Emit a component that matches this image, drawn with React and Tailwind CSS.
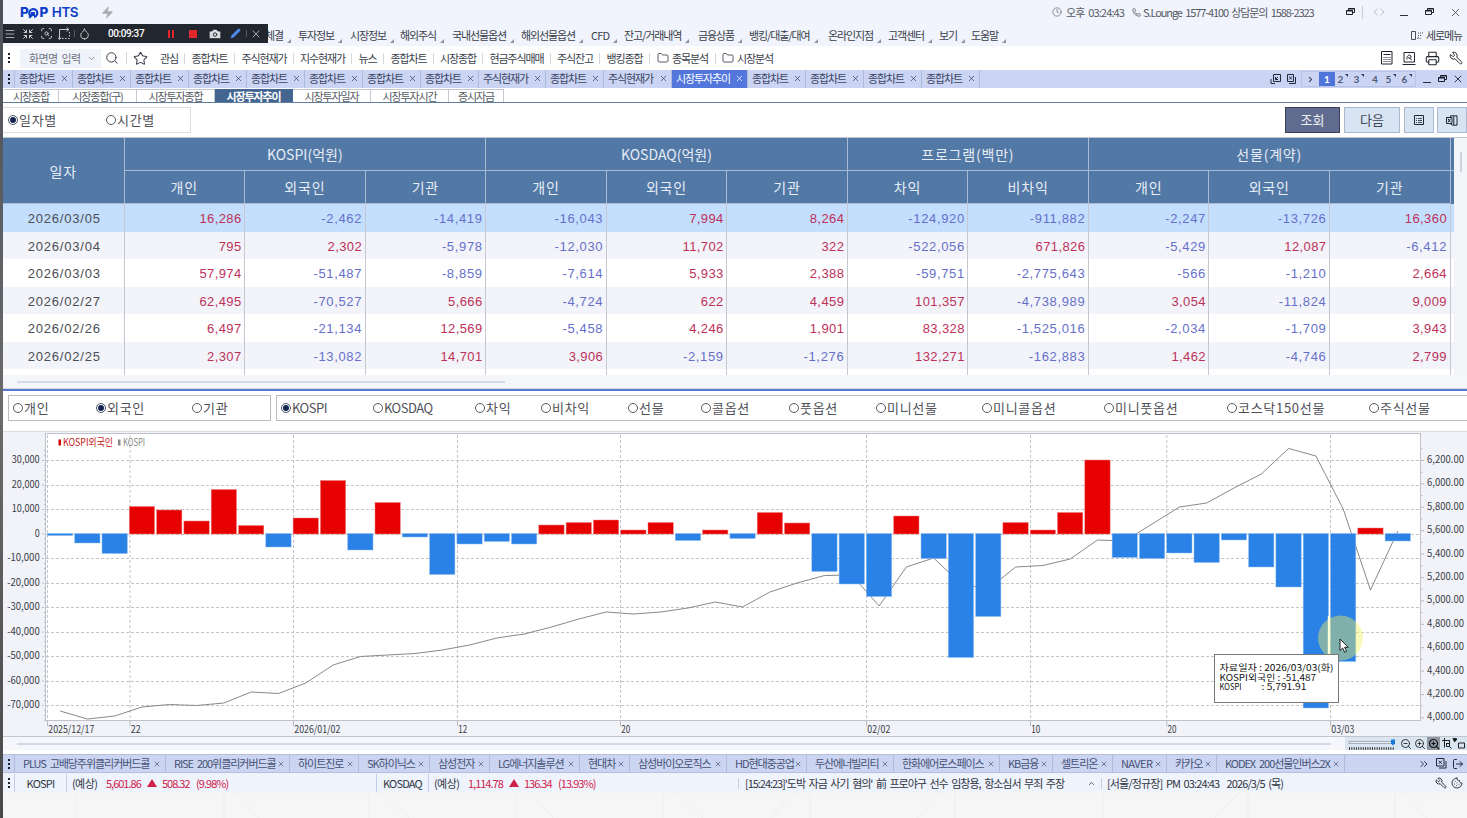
import clsx from "clsx";
import {
    Menu, Shrink, ScanSearch, Droplet, Camera, Pencil, X, Search, Star, ChevronDown, ChevronRight, ChevronsRight,
    ChevronUp, Folder, Clock4, Phone, Printer, Wrench, Cookie, LogOut, ZoomIn, ZoomOut, Zap,
} from "lucide-react";

const MENUS = [
    ["체결", "w-[33px]"], ["투자정보", "w-[52px]"], ["시장정보", "w-[50px]"], ["해외주식", "w-[52px]"],
    ["국내선물옵션", "w-[69px]"], ["해외선물옵션", "w-[70px]"], ["CFD", "w-[33px]"], ["잔고/거래내역", "w-[74px]"],
    ["금융상품", "w-[51px]"], ["뱅킹/대출/대여", "w-[79px]"], ["온라인지점", "w-[60px]"], ["고객센터", "w-[51px]"],
    ["보기", "w-[32px]"], ["도움말", "w-[36px]"],
];

const SHORTCUTS = [
    ["관심", "w-[31px]"], ["종합차트", "w-[50px]"], ["주식현재가", "w-[59px]"], ["지수현재가", "w-[58px]"],
    ["뉴스", "w-[32px]"], ["종합차트", "w-[50px]"], ["시장종합", "w-[49px]"], ["현금주식매매", "w-[68px]"],
    ["주식잔고", "w-[49px]"], ["뱅킹종합", "w-[50px]"], ["종목분석", "w-[66px]", true], ["시장분석", "w-[64px]", true],
];

const TABS = [
    ...Array(8).fill(["종합차트", "w-[58px]"]),
    ["주식현재가", "w-[67px]"], ["종합차트", "w-[58px]"], ["주식현재가", "w-[68px]"], ["시장투자추이", "w-[76px]", true],
    ...Array(4).fill(["종합차트", "w-[58px]"]),
];

const SUB_TABS = [
    ["시장종합", "w-[55px]"], ["시장종합(구)", "w-[78px]"], ["시장투자종합", "w-[78px]"], ["시장투자추이", "w-[78px]", true],
    ["시장투자일자", "w-[78px]"], ["시장투자시간", "w-[78px]"], ["증시자금", "w-[55px]"],
];

const GROUPS = [
    { name: "KOSPI(억원)", cols: ["개인", "외국인", "기관"], span: "col-span-3" },
    { name: "KOSDAQ(억원)", cols: ["개인", "외국인", "기관"], span: "col-span-3" },
    { name: "프로그램(백만)", cols: ["차익", "비차익"], span: "col-span-2" },
    { name: "선물(계약)", cols: ["개인", "외국인", "기관"], span: "col-span-3" },
];

const ROWS = [
    ["2026/03/05", "16,286", "-2,462", "-14,419", "-16,043", "7,994", "8,264", "-124,920", "-911,882", "-2,247", "-13,726", "16,360"],
    ["2026/03/04", "795", "2,302", "-5,978", "-12,030", "11,702", "322", "-522,056", "671,826", "-5,429", "12,087", "-6,412"],
    ["2026/03/03", "57,974", "-51,487", "-8,859", "-7,614", "5,933", "2,388", "-59,751", "-2,775,643", "-566", "-1,210", "2,664"],
    ["2026/02/27", "62,495", "-70,527", "5,666", "-4,724", "622", "4,459", "101,357", "-4,738,989", "3,054", "-11,824", "9,009"],
    ["2026/02/26", "6,497", "-21,134", "12,569", "-5,458", "4,246", "1,901", "83,328", "-1,525,016", "-2,034", "-1,709", "3,943"],
    ["2026/02/25", "2,307", "-13,082", "14,701", "3,906", "-2,159", "-1,276", "132,271", "-162,883", "1,462", "-4,746", "2,799"],
];

const INVESTORS = [["개인", "w-[83px]"], ["외국인", "w-[96px]", true], ["기관", "w-[60px]"]];
const MARKETS = [
    ["KOSPI", "w-[92px]", true], ["KOSDAQ", "w-[102px]"], ["차익", "w-[66px]"], ["비차익", "w-[87px]"], ["선물", "w-[73px]"],
    ["콜옵션", "w-[88px]"], ["풋옵션", "w-[87px]"], ["미니선물", "w-[106px]"], ["미니콜옵션", "w-[122px]"],
    ["미니풋옵션", "w-[123px]"], ["코스닥150선물", "w-[142px]"], ["주식선물", "w-[80px]"],
];

const STOCKS = [
    ["PLUS 고배당주위클리커버드콜", "w-[151px]"], ["RISE 200위클리커버드콜", "w-[124px]"], ["하이트진로", "w-[69px]"],
    ["SK하이닉스", "w-[71px]"], ["삼성전자", "w-[60px]"], ["LG에너지솔루션", "w-[90px]"], ["현대차", "w-[50px]"],
    ["삼성바이오로직스", "w-[97px]"], ["HD현대중공업", "w-[80px]"], ["두산에너빌리티", "w-[87px]"],
    ["한화에어로스페이스", "w-[106px]"], ["KB금융", "w-[53px]"], ["셀트리온", "w-[60px]"], ["NAVER", "w-[54px]"],
    ["카카오", "w-[50px]"], ["KODEX 200선물인버스2X", "w-[128px]"],
];

// end y of every bar; the zero line is at ZERO
const ZERO = 533.5;
const BARS = [
    535, 542.5, 553, 506.5, 510, 521, 489.5, 525.5, 546.5, 518, 480.5, 549.5, 502.5, 536.5, 574, 543.5, 541, 543.5, 525, 522.5,
    520, 530, 522.5, 540, 530, 538, 512.5, 523, 571, 583.5, 596, 516, 558, 657, 616, 522.5, 530, 512.5, 460, 557,
    558, 552.5, 562, 539.5, 566.5, 586.5, 707.5, 661, 528, 540.5,
];
const INDEX_LINE = [
    711, 719, 716, 707, 704.5, 705.5, 703, 692, 693.5, 683, 665, 656.5, 655, 653.5, 650, 645, 638, 634, 627, 619,
    612, 614, 612, 608, 602, 607, 592, 583, 575.5, 575, 606, 567, 558, 584, 589, 567, 565.5, 559, 540, 541,
    524, 507, 503, 488, 474, 448.5, 456, 509, 590, 531,
];
const PITCH = 27.3;
const FIRST_X = 47.4;
const LEFT_LABELS = ["30,000", "20,000", "10,000", "0", "-10,000", "-20,000", "-30,000", "-40,000", "-50,000", "-60,000", "-70,000"];
const RIGHT_LABELS = ["6,200.00", "6,000.00", "5,800.00", "5,600.00", "5,400.00", "5,200.00", "5,000.00", "4,800.00", "4,600.00", "4,400.00", "4,200.00", "4,000.00"];
const DATES = [
    [47.5, "2025/12/17", 46], [130, "22", 10], [293.5, "2026/01/02", 46], [457.5, "12", 9], [620.5, "20", 9],
    [866.5, "02/02", 23], [1030.5, "10", 9], [1166.8, "20", 9], [1330.5, "03/03", 23],
];

function Dots() {
    return (
        <span className="flex w-[11px] shrink-0 flex-col items-center justify-center gap-[2px]">
            <i className="size-[2px] bg-[#1b1f2a]" />
            <i className="size-[2px] bg-[#1b1f2a]" />
            <i className="size-[2px] bg-[#1b1f2a]" />
        </span>
    );
}

function Restore() {
    return (
        <svg width="11" height="10" viewBox="0 0 11 10" fill="none" stroke="#1b1f2a" strokeWidth="1">
            <path d="M3.500 3.500V1.500h6v4H7.500M1.500 3.500h6v4h-6zM3.500 2h6M1.500 4h6" />
        </svg>
    );
}

function Minimize() {
    return <span className="mt-[7px] h-[1.5px] w-[8px] bg-[#2b3040]" />;
}

function Radio({ label, width, checked }) {
    return (
        <label className={clsx("flex shrink-0 items-center", width)}>
            <span className={clsx("flex size-[10px] shrink-0 items-center justify-center rounded-full border bg-white", checked ? "border-[#4a5570]" : "border-[#555a62]")}>
                {checked && <i className="size-[6px] rounded-full bg-[#10264f]" />}
            </span>
            <span className={clsx("mb-[2px] ml-px text-[13px] whitespace-nowrap text-[#505058]", /^[A-Z]/.test(label) ? "tracking-[-0.5px]" : "tracking-[0.7px]")}>{label}</span>
        </label>
    );
}

function TitleBar() {
    return (
        <header className="flex h-[24px] items-center justify-between bg-[#f1f4fc] text-[11px]">
            <div className="flex items-center pt-px pl-[17px] text-[#0f3fc8]">
                <span className="flex items-center font-['Inter'] text-[13.5px] leading-none font-extrabold tracking-[-0.4px]">
                    P
                    <svg width="11" height="12" viewBox="0 0 11 12" fill="none" stroke="#0f3fc8" strokeWidth="2.2">
                        <path d="M2.2 8.6A4 4 0 1 1 6 10M1.2 10.8 5.6 6.4M5.8 9V6.2H3" />
                    </svg>
                    P
                </span>
                <span className="ml-[4px] font-['Inter'] text-[13.5px] leading-none font-semibold tracking-[-0.5px]">HTS</span>
                <Zap size={13} className="ml-[23px] fill-[#a9abb2] text-[#a9abb2]" strokeWidth={1} />
            </div>
            <div className="flex items-center text-[#555963]">
                <Clock4 size={10} strokeWidth={1.5} />
                <span className="ml-[4px] w-[66px] tracking-[-0.85px] [word-spacing:2px]">오후 03:24:43</span>
                <Phone size={9} strokeWidth={2} />
                <span className="ml-[2px] w-[202px] tracking-[-1.1px] whitespace-nowrap [word-spacing:2px]">S.Lounge 1577-4100 상담문의 1588-2323</span>
                <Restore />
                <span className="ml-[6px] h-[13px] w-px bg-[#c9ccd6]" />
                <svg width="12" height="8" viewBox="0 0 12 8" fill="none" stroke="#b4b8c4" className="ml-[10px]"><path d="M4.5.8 1 4l3.500 3.200M7.500.8 11 4 7.500 7.200" /></svg>
                <span className="ml-[15px] flex"><Minimize /></span>
                <span className="ml-[16px] flex"><Restore /></span>
                <X size={13} strokeWidth={1.8} className="mr-[5px] ml-[14px]" />
            </div>
        </header>
    );
}

function RecorderBar() {
    return (
        <div className="absolute top-[24px] left-[3px] flex h-[19px] w-[265px] items-center bg-[#22272f] text-[#c6c8cc]">
            <Menu size={12} className="ml-[1px]" strokeWidth={1.6} />
            <Shrink size={12} className="ml-[6px]" strokeWidth={2} />
            <ScanSearch size={13} className="ml-[6px]" strokeWidth={1.8} />
            <svg width="13" height="13" viewBox="0 0 13 13" fill="none" stroke="#c6c8cc" className="ml-[5px]">
                <path d="M1.500 12V2.500h9M8.500.5l2.500 2-2.500 2M0 10.500l1.500 2 1.500-2" /><path d="M4 11.500h8M11.500 5v6" strokeDasharray="1.500 1.500" />
            </svg>
            <span className="ml-[3px] h-[7px] w-px bg-[#555a63]" />
            <Droplet size={13} className="ml-[3px]" strokeWidth={1.8} />
            <span className="ml-[17px] w-[60px] font-['Roboto'] text-[10px] font-medium tracking-[-0.4px] text-white">00:09:37</span>
            <span className="flex gap-[2px]">
                <i className="h-[8px] w-[2px] bg-[#e0282e]" />
                <i className="h-[8px] w-[2px] bg-[#e0282e]" />
            </span>
            <span className="ml-[15px] size-[8px] bg-[#e0282e]" />
            <Camera size={14} className="ml-[11px] fill-[#dcdcde] text-[#22272f]" strokeWidth={1.6} />
            <Pencil size={11} className="ml-[8px] fill-[#4d8df0] text-[#4d8df0]" strokeWidth={1} />
            <span className="ml-[5px] h-[7px] w-px bg-[#555a63]" />
            <X size={12} className="ml-[3px]" strokeWidth={1.6} />
        </div>
    );
}

function MenuBar() {
    return (
        <nav className="flex h-[22px] items-center bg-[#f1f4fc] pl-[262px] text-[11px] tracking-[-1.1px] text-[#3b3f4b]">
            {MENUS.map(([label, width]) => (
                <span key={label} className={clsx("flex shrink-0 items-center gap-[4px] whitespace-nowrap", width)}>
                    <span className={label === "CFD" ? "tracking-[-0.8px]" : ""}>{label}</span>
                    <svg width="4" height="4" viewBox="0 0 4 4" className="mt-[11px] shrink-0"><path d="M4 0v4H0z" fill="#8d93a3" /></svg>
                </span>
            ))}
            <span className="mr-[5px] ml-auto flex items-center gap-[3px]">
                <svg width="13" height="9" viewBox="0 0 13 9" fill="none" stroke="#4a4e5a"><path d="M1.500.5h4v8h-4z" /><path d="M8 2h1M10 2h1M12 2h1M8 4.500h1M10 4.500h1M7 7.500l2-1M9.500 7.500h1" /></svg>
                세로메뉴
            </span>
        </nav>
    );
}

function ToolBar() {
    return (
        <div className="flex h-[24px] items-center bg-white text-[11px] tracking-[-1.1px] text-[#3b3f4b]">
            <Dots />
            <div className="ml-[6px] flex h-[19px] w-[81px] items-center justify-between bg-[#f1f3fb] pr-[5px] pl-[9px] text-[#70737c]">
                <span className="tracking-[-0.6px] [word-spacing:2px]">화면명 입력</span>
                <ChevronDown size={9} strokeWidth={2} />
            </div>
            <Search size={14} className="ml-[4px]" strokeWidth={1.7} />
            <span className="ml-[7px] h-[12px] w-px bg-[#d5d7dd]" />
            <Star size={15} className="ml-[6px]" strokeWidth={1.7} />
            <span className="ml-[6px] flex">
                {SHORTCUTS.map(([label, width, folder], i) => (
                    <span key={i} className={clsx("flex h-[11px] shrink-0 items-center justify-center gap-[3px] border-r whitespace-nowrap", width, i === 11 ? "border-transparent" : "border-[#d5d7dd]")}>
                        {folder && <Folder size={12} strokeWidth={1.7} className="shrink-0" />}
                        {label}
                    </span>
                ))}
            </span>
            <span className="mr-[4px] ml-auto flex items-center gap-[9px] text-[#22252d]">
                <svg width="12" height="14" viewBox="0 0 12 14" fill="none" stroke="#22252d">
                    <path d="M.5.5h10.500v12.500H.5zM2.500 3.500h7" /><path d="M2.500 6.500h7M2.500 8.500h7M2.500 10.500h7" strokeDasharray="1 1" />
                </svg>
                <svg width="14" height="13" viewBox="0 0 14 13" fill="none" stroke="#22252d"><path d="M2 .5h10.500v9.500H2zM.5 12.500h13M5 7.500C4.500 4 6.500 2.800 8 3.300s1.500 2.700 0 3.200L6 5.500M8 6.500 9.800 8" /></svg>
                <Printer size={15} strokeWidth={1.7} />
                <Wrench size={14} strokeWidth={1.7} className="-scale-x-100" />
            </span>
        </div>
    );
}

function ScreenTabs() {
    return (
        <div className="flex h-[18px] items-stretch bg-[#cbd5f3] text-[11px] tracking-[-1.1px] text-[#3a4463]">
            <Dots />
            {TABS.map(([label, width, active], i) => (
                <span
                    key={i}
                    className={clsx("flex shrink-0 items-center justify-between border-l border-[#b0bbdc] pr-[3px] pb-px pl-[4px] whitespace-nowrap", width, active && "bg-[#5377dc] text-white")}
                >
                    {label}
                    <X size={9} strokeWidth={2} />
                </span>
            ))}
            <span className="w-px bg-[#b0bbdc]" />
            <span className="mr-[3px] ml-auto flex items-center tracking-normal text-[#22283a]">
                <svg width="27" height="12" viewBox="0 0 27 12" fill="none" stroke="#22283a" className="mr-[4px]">
                    <path d="M3.500 1.500h7v7h-7zM1 6v4.500h4M5.500 6.500 8 4M5.500 4v2.500H8M17.500 1.500h6v7h-6zM19 10.500h6.500V4M19.200 3.500l2.600 3M21.800 3.500l-2.600 3" />
                </svg>
                <span className="flex items-center border border-[#b7c2e4] text-[10px] text-[#505a75]">
                    <ChevronRight size={9} strokeWidth={2.8} className="mx-[4px] text-[#22283a]" />
                    {[1, 2, 3, 4, 5, 6].map((n) => (
                        <span key={n} className={clsx("flex h-[14px] w-[16px] items-center justify-center font-['Lato'] leading-none font-bold", n === 1 && "bg-[#4f75da] text-white")}>
                            {n}
                            {n !== 1 && n !== 4 && <svg width="3" height="3" viewBox="0 0 3 3" className="mb-[8px] ml-[2px]"><path d="M0 0h3v3z" fill="#303850" /></svg>}
                        </span>
                    ))}
                </span>
                <span className="mr-[6px] ml-[7px] flex"><Minimize /></span>
                <Restore />
                <X size={12} strokeWidth={1.8} className="ml-[4px]" />
            </span>
        </div>
    );
}

function SubTabs() {
    return (
        <div className="flex h-[15px] shrink-0 border-b border-[#5f7e9e] bg-white pt-px pl-px text-[11px] leading-[12px] tracking-[-1.1px] text-[#555a62]">
            {SUB_TABS.map(([label, width, active]) => (
                <span key={label} className={clsx("shrink-0 border-t border-r text-center whitespace-nowrap", width, active ? "border-[#44689a] bg-[#44658f] font-bold text-white" : "border-[#c4c8cf]")}>
                    {label}
                </span>
            ))}
        </div>
    );
}

function QueryBar() {
    return (
        <div className="flex h-[34px] items-start justify-between bg-white pt-[4px]">
            <div className="flex h-[26px] w-[188px] items-center border border-l-0 border-[#dcdee2] pl-[5px]">
                <Radio label="일자별" width="w-[98px]" checked />
                <Radio label="시간별" width="w-[70px]" />
            </div>
            <div className="flex text-[13px] text-[#3c4658]">
                <button className="h-[26px] w-[55px] border border-[#3a4058] bg-[#5f6c8f] pb-[2px] text-white/90">조회</button>
                <button className="ml-[4px] h-[26px] w-[56px] border border-[#a9b9cf] bg-[#d8e4f2] pb-[2px]">다음</button>
                <button className="ml-[4px] flex h-[26px] w-[30px] items-center justify-center border border-[#a9b9cf] bg-[#d8e4f2]">
                    <svg width="10" height="10" viewBox="0 0 10 10" fill="none" stroke="#1e2636"><path d="M.5.5h9v9h-9z" /><path d="M2 3.500h1M4 3.500h4M2 5.500h1M4 5.500h4M2 7.500h1M4 7.500h4" strokeOpacity=".8" /></svg>
                </button>
                <button className="ml-[3px] flex h-[26px] w-[30px] items-center justify-center border border-[#a9b9cf] bg-[#d8e4f2]">
                    <svg width="12" height="11" viewBox="0 0 12 11" fill="none" stroke="#1e2636"><path d="M4.500 2V.8h6.500v9.400H6.500L4.500 9M.5 2.500h5.500v6H.5z" /><path d="M2 3.800 4.500 7.200M4.500 3.800 2 7.200M7.800 1v9" /></svg>
                </button>
            </div>
        </div>
    );
}

function InvestorTable() {
    return (
        <section className="flex h-[238px] border-t border-[#c3c6cc] bg-[#f4f5f9]">
            <div className="w-[1451px] overflow-hidden">
                <div className="grid h-[66px] grid-cols-[121.5px_repeat(11,120.55px)_4px] grid-rows-2 bg-[#5278a6] text-[14px] tracking-[0.8px] text-[#e6edf5]">
                    <div className="row-span-2 flex items-center justify-center border-r border-b border-[#a9bbd2]">일자</div>
                    {GROUPS.map((g) => (
                        <div key={g.name} className={clsx("flex items-center justify-center border-r border-b border-[#a9bbd2]", g.span, g.name.startsWith("K") && "tracking-[0px]")}>{g.name}</div>
                    ))}
                    <div className="border-b border-[#a9bbd2]" />
                    {GROUPS.flatMap((g) => g.cols.map((c, i) => (
                        <div key={g.name + i} className="flex items-center justify-center border-r border-b border-[#a9bbd2]">{c}</div>
                    )))}
                </div>
                {ROWS.map((row, r) => (
                    <div
                        key={row[0]}
                        className={clsx("grid h-[27.5px] grid-cols-[121.5px_repeat(11,120.55px)_4px] items-stretch font-['Liberation_Sans'] text-[13px] leading-[29px]", r === 0 ? "bg-[#c4defd]" : r % 2 ? "bg-[#f3f4f9]" : "bg-white")}
                    >
                        {row.map((v, i) => (
                            <div
                                key={i}
                                className={clsx(
                                    "border-r border-[#c6c8d0]",
                                    i === 0 ? "pl-[2px] text-center tracking-[0.8px] text-[#4a4d54]" : "pr-[2.5px] text-right",
                                    i > 0 && (v.startsWith("-") ? "tracking-[0.65px] text-[#6670cb]" : "tracking-[0.4px] text-[#bd3159]"),
                                )}
                            >
                                {v}
                            </div>
                        ))}
                    </div>
                ))}
                <div className="grid h-[6px] grid-cols-[121.5px_repeat(11,120.55px)_4px] bg-white">
                    {ROWS[0].map((_, i) => <div key={i} className="border-r border-[#c6c8d0]" />)}
                </div>
            </div>
            <div className="flex flex-1 justify-center pt-[14px]">
                <span className="h-[20px] w-[2px] bg-[#cfd3e0]" />
            </div>
        </section>
    );
}

function FilterBar() {
    return (
        <div className="flex h-[40px] items-start gap-[5px] bg-white pt-[4px] pl-[5px]">
            <div className="flex h-[26px] w-[263px] items-center border border-[#b9bcc2] pl-[4px]">
                {INVESTORS.map(([label, width, checked]) => <Radio key={label} label={label} width={width} checked={checked} />)}
            </div>
            <div className="flex h-[26px] flex-1 items-center overflow-hidden border border-r-0 border-[#b9bcc2] pl-[4px]">
                {MARKETS.map(([label, width, checked]) => <Radio key={label} label={label} width={width} checked={checked} />)}
            </div>
        </div>
    );
}

function FlowChart() {
    const points = INDEX_LINE.map((y, i) => `${FIRST_X + i * PITCH + 12.7},${y}`).join(" ");

    return (
        <svg width="1464" height="306" viewBox="3 431 1464 306" className="block text-[10.5px]">
            <rect x="3" y="431" width="1464" height="306" fill="#f1f3f9" />
            <path d="M3 431h1464M3 736.500h1464" stroke="#c2c5cd" />
            <rect x="45.500" y="433.500" width="1375" height="287" fill="#fff" stroke="#bfc2ca" />

            {/* grid */}
            <g stroke="#c4c4c6" strokeDasharray="3 2">
                {LEFT_LABELS.map((l, i) => <path key={l} d={`M46 ${Math.round(460 + i * 24.5) + 0.5}H1419`} />)}
                {DATES.map(([x]) => <path key={x} d={`M${x} 435V719`} />)}
            </g>
            <g stroke="#b7bac3">
                {Array.from({ length: 56 }, (_, i) => <path key={i} d={`M${i % 5 === 2 ? 42 : 44} ${450.7 + i * 4.9}h2`} />)}
                {Array.from({ length: 24 }, (_, i) => <path key={i} d={`M1421 ${448.8 + i * 11.7}h${i % 2 ? 3 : 1.5}`} />)}
                {DATES.map(([x]) => <path key={x} d={`M${x} 721v5`} />)}
            </g>

            <polyline points={points} fill="none" stroke="#7b7b7d" strokeWidth="0.9" />

            {/* bars */}
            {BARS.map((y, i) => (
                <rect
                    key={i}
                    x={FIRST_X + i * PITCH}
                    y={Math.min(y, ZERO)}
                    width="25.300"
                    height={Math.abs(y - ZERO) + 0.5}
                    fill={y < ZERO ? "#e60000" : "#2a82e6"}
                    stroke={y < ZERO ? "#f08080" : "#8dbdf2"}
                    strokeWidth="0.5"
                />
            ))}

            {/* legend */}
            <rect x="58.500" y="439.500" width="2.500" height="6" fill="#d40000" />
            <text x="63" y="445.500" fill="#c81414" textLength="50" lengthAdjust="spacingAndGlyphs">KOSPI외국인</text>
            <rect x="118" y="439.500" width="2.500" height="6" fill="#888" />
            <text x="123" y="445.500" fill="#858585" textLength="22" lengthAdjust="spacingAndGlyphs">KOSPI</text>

            {/* axes */}
            <g fill="#3a3c44">
                {LEFT_LABELS.map((l, i) => {
                    const w = l.length === 1 ? 5 : l.length * 4.65;
                    return <text key={l} x={39.7 - w} y={463 + i * 24.5} textLength={w} lengthAdjust="spacingAndGlyphs">{l}</text>;
                })}
                {RIGHT_LABELS.map((l, i) => (
                    <text key={l} x="1427" y={463 + i * 23.4} textLength="37" lengthAdjust="spacingAndGlyphs">{l}</text>
                ))}
                {DATES.map(([x, l, w]) => <text key={x} x={x + 0.8} y="733" textLength={w} lengthAdjust="spacingAndGlyphs">{l}</text>)}
            </g>

            <circle cx="1340.500" cy="638" r="22.500" fill="#f5f05a" fillOpacity="0.42" />
            <path d="M1328.800 616v40" stroke="#fffde0" strokeWidth="2" />

            {/* hover tooltip */}
            <rect x="1214.500" y="654.500" width="124" height="48" fill="#fff" stroke="#777" />
            <g fill="#111" className="text-[8.8px]">
                <text x="1219.500" y="671" textLength="114" lengthAdjust="spacingAndGlyphs">자료일자 : 2026/03/03(화)</text>
                <text x="1219.500" y="680.700" textLength="96.500" lengthAdjust="spacingAndGlyphs">KOSPI외국인 : -51,487</text>
                <text x="1219.500" y="690.400" textLength="22" lengthAdjust="spacingAndGlyphs">KOSPI</text>
                <text x="1261.500" y="690.400" textLength="45" lengthAdjust="spacingAndGlyphs">: 5,791.91</text>
            </g>
            <path d="M1340 639v11.500l2.700-2.400 1.900 4.100 1.900-.9-1.900-4h3.600z" fill="#fff" stroke="#111" strokeWidth="0.9" />
        </svg>
    );
}

function ChartScroll() {
    return (
        <div className="flex h-[13px] items-center bg-[#f5f7fc] pl-[14px]">
            <span className="h-[2px] w-[1314px] bg-[#d5d9e3]" />
            <div className="ml-auto flex h-full w-[122px] items-center bg-[#d9e5f0]">
                <svg width="50" height="13" viewBox="0 0 50 13" className="ml-[3px] shrink-0">
                    <path d="M1 4.500h44v2H1z" fill="#e9f0f6" stroke="#8a949e" strokeWidth="0.700" />
                    <path d="M1 11.500h46" stroke="#222" strokeWidth="2.500" strokeDasharray="1 1.300" />
                    <path d="M43 2.500h4v4l-2 2-2-2z" fill="#1679d8" />
                </svg>
                <ZoomOut size={12} className="ml-[2px] shrink-0 text-[#222]" strokeWidth={1.8} />
                <ZoomIn size={12} className="ml-[2px] shrink-0 text-[#222]" strokeWidth={1.8} />
                <span className="ml-px flex h-[13px] w-[13px] shrink-0 items-center justify-center bg-[#8d98a4]"><ZoomIn size={12} className="text-[#111]" strokeWidth={2.4} /></span>
                <svg width="24" height="12" viewBox="0 0 24 12" fill="none" stroke="#222" className="ml-[2px] shrink-0">
                    <path d="M0 2.500h8M2.500 0v9.500M7.500 3v6M4 5.500h3M4.500 5.500v3h3M7.500 8.500l2 2M16.500 5h6v5h-6z" /><path d="m11 0 4 1-2.500 3z" fill="#111" />
                </svg>
            </div>
        </div>
    );
}

function StockTabs() {
    return (
        <div className="flex h-[19px] items-stretch border-y border-[#b6c0da] bg-[#cbd5f2] text-[11px] tracking-[-1.05px] text-[#465174]">
            <Dots />
            {STOCKS.map(([label, width]) => (
                <span key={label} className={clsx("flex shrink-0 items-center justify-between border-l border-[#b0bbdc] pr-[4px] pl-[8px] whitespace-nowrap [word-spacing:2.5px]", width, label === "NAVER" && "tracking-[-0.6px]")}>
                    {label}
                    <X size={8} strokeWidth={2} />
                </span>
            ))}
            <span className="w-px bg-[#b0bbdc]" />
            <span className="mr-[3px] ml-auto flex items-center text-[#22283a]">
                <ChevronsRight size={12} strokeWidth={1.8} />
                <svg width="11" height="11" viewBox="0 0 11 11" fill="none" stroke="#22283a" className="ml-[6px]"><path d="M.5.5h7.500v7.500H.5zM3 10h7V3M2.800 2.800l3 3M5.800 2.800l-3 3" /></svg>
                <LogOut size={12} strokeWidth={2} className="ml-[5px]" />
            </span>
        </div>
    );
}

function Quote({ name, width, price, diff, rate }) {
    return (
        <div className={clsx("flex items-center border-l border-[#c5cee6]", width)}>
            <span className="flex h-[18px] w-[52px] items-center justify-center border-r border-[#c5cee6] tracking-[-0.8px]">{name}</span>
            <span className="ml-[5px] w-[34px] tracking-[-0.6px]">(예상)</span>
            <span className="w-[41px] tracking-[-1px] text-[#cf2249]">{price}</span>
            <svg width="10" height="8" viewBox="0 0 10 8"><path d="M5 0l5 8H0z" fill="#cf2249" /></svg>
            <span className="ml-[5px] w-[34px] tracking-[-1px] text-[#cf2249]">{diff}</span>
            <span className="tracking-[-0.95px] text-[#cf2249]">{rate}</span>
        </div>
    );
}

function StatusBar() {
    return (
        <footer className="flex h-[20px] items-center bg-[#eff3fc] text-[11px] whitespace-nowrap text-[#30343e]">
            <Dots />
            <Quote name="KOSPI" width="w-[362px]" price="5,601.86" diff="508.32" rate="(9.98%)" />
            <Quote name="KOSDAQ" width="w-[362px]" price="1,114.78" diff="136.34" rate="(13.93%)" />
            <span className="flex w-[363px] items-center justify-between border-l border-[#c5cee6] pr-[5px] pl-[6px] tracking-[-1.04px] [word-spacing:2.2px]">
                [15:24:23]'도박 자금 사기 혐의' 前 프로야구 선수 임창용, 항소심서 무죄 주장
                <ChevronUp size={9} strokeWidth={2} />
            </span>
            <span className="border-l border-[#c5cee6] pl-[5px] tracking-[-0.88px] [word-spacing:2px]">[서울/정규장] PM 03:24:43&nbsp; 2026/3/5 (목)</span>
            <span className="mr-[4px] ml-auto flex items-center gap-[4px] text-[#22252d]">
                <Wrench size={12} strokeWidth={1.8} className="-scale-x-100" />
                <Cookie size={12} strokeWidth={1.8} />
            </span>
        </footer>
    );
}

export default function App() {
    return (
        <div className="relative flex h-[818px] w-[1467px] overflow-hidden bg-[#f6f6f7] font-['Noto_Sans_CJK_KR',sans-serif] leading-none">
            <div className="w-[3px] shrink-0 bg-linear-to-b from-[#4c5058] via-[#6b6b6c] to-[#48484a]" />
            <main className="flex w-[1464px] flex-col">
                <TitleBar />
                <MenuBar />
                <ToolBar />
                <ScreenTabs />
                <SubTabs />
                <QueryBar />
                <InvestorTable />
                <div className="flex h-[14px] items-center border-b border-[#d6d9e2] bg-[#f4f6fa] pl-[14px]">
                    <span className="h-[2px] w-[488px] bg-[#d3dae8]" />
                </div>
                <div className="h-[2px] bg-[#5b78cf]" />
                <FilterBar />
                <FlowChart />
                <ChartScroll />
                <div className="h-[4px] bg-white" />
                <StockTabs />
                <StatusBar />
                <svg width="1464" height="25" viewBox="0 0 1464 25" stroke="#ededef" fill="none">
                    <path d="M73 0v25M221 0v25M366 0v25M513 0v25M660 0v25M807 0v25M952 0v25M1100 0v25M1245 0v25M1392 0v25M232 0l24 25M380 0l26 25M528 0l22 25M672 0l28 25M790 0l-22 25M938 0l-24 25M1236 0l-24 25M1400 0l24 25" />
                </svg>
            </main>
            <RecorderBar />
        </div>
    );
}
